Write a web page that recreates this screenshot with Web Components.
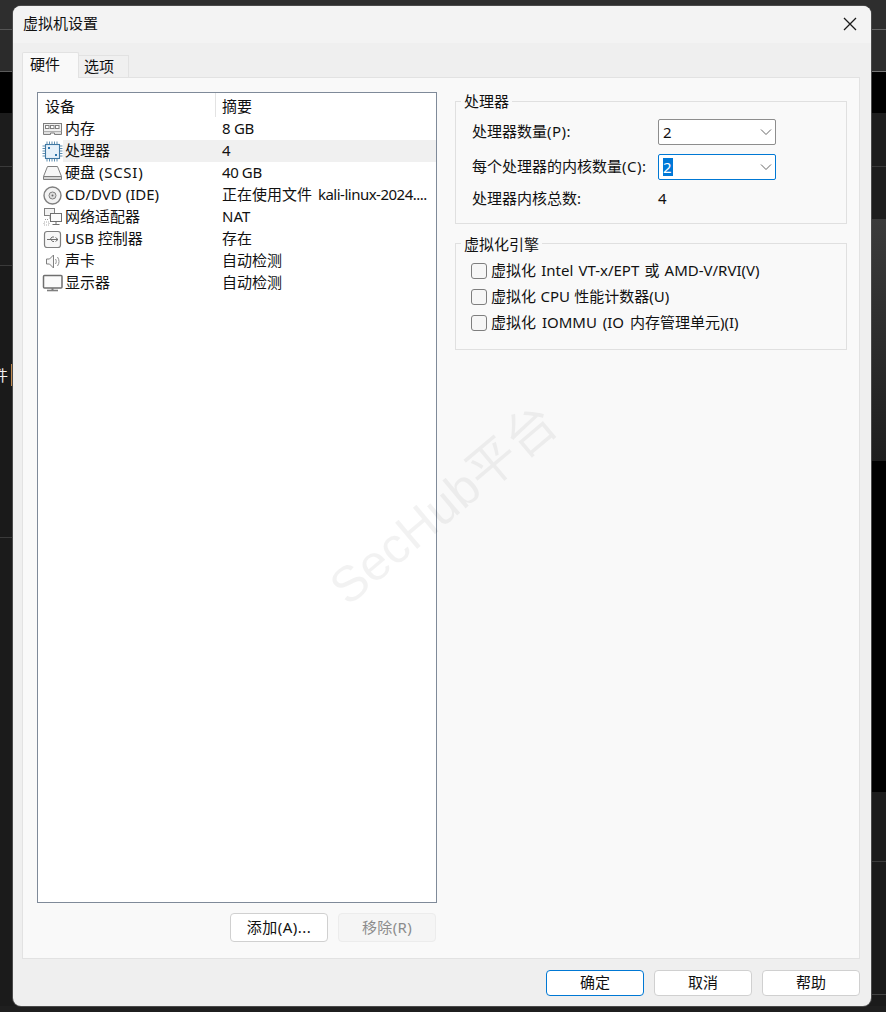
<!DOCTYPE html>
<html lang="zh"><head><meta charset="utf-8"><title>虚拟机设置</title>
<style>
html,body{margin:0;padding:0;background:#1b1b1b}
body{font:15px/22px "Noto Sans","Noto Sans CJK SC",sans-serif;color:#111}
</style></head><body>
<x-desktop>
<x-dialog heading="虚拟机设置">
  <x-panel>
    <div slot="left">
      <x-device-list>
        <x-device icon="mem" name="内存" summary="<span style='letter-spacing:-.3px'>8 GB</span>"></x-device>
        <x-device icon="cpu" name="处理器" summary="4" selected></x-device>
        <x-device icon="disk" name="硬盘 <span style='word-spacing:0;letter-spacing:.75px'>(SCSI)</span>" summary="<span style='letter-spacing:-.4px'>40 GB</span>"></x-device>
        <x-device icon="cd" name="CD/DVD (IDE)" summary="正在使用文件 <span style='letter-spacing:-.5px;margin-left:2px'>kali-linux-2024....</span>"></x-device>
        <x-device icon="net" name="网络适配器" summary="NAT"></x-device>
        <x-device icon="usb" name="USB 控制器" summary="存在"></x-device>
        <x-device icon="sound" name="声卡" summary="自动检测"></x-device>
        <x-device icon="display" name="显示器" summary="自动检测"></x-device>
      </x-device-list>
    </div>
    <x-btn slot="actions" style="letter-spacing:.5px">添加(A)...</x-btn>
    <x-btn slot="actions" disabled style="letter-spacing:.35px">移除(R)</x-btn>
    <x-group slot="right" legend="处理器" variant="form">
      <x-field label="处理器数量<span style='letter-spacing:.5px'>(P):</span>"><x-combo value="2"></x-combo></x-field>
      <x-field label="每个处理器的内核数量<span style='letter-spacing:.5px'>(C):</span>"><x-combo value="2" focused></x-combo></x-field>
      <x-field label="处理器内核总数:" plain><span>4</span></x-field>
    </x-group>
    <x-group slot="right" legend="虚拟化引擎" variant="checks">
      <x-check style="word-spacing:1.25px">虚拟化 Intel VT-x/EPT 或 AMD-V/RVI(V)</x-check>
      <x-check style="word-spacing:.5px">虚拟化 CPU 性能计数器(U)</x-check>
      <x-check style="word-spacing:2px">虚拟化 IOMMU (IO 内存管理单元)(I)</x-check>
    </x-group>
  </x-panel>
  <x-btn slot="footer" primary>确定</x-btn>
  <x-btn slot="footer">取消</x-btn>
  <x-btn slot="footer">帮助</x-btn>
</x-dialog>
</x-desktop>
<script>
function def(name, css, html){
  customElements.define(name, class extends HTMLElement{
    constructor(){super();this.attachShadow({mode:'open'});}
    connectedCallback(){
      const h=typeof html==='function'?html(this):html;
      this.shadowRoot.innerHTML='<style>'+css+'</style>'+h;
    }
  });
}
const a=(e,n)=>e.getAttribute(n)||'';
def('x-desktop',`
:host{display:block;position:relative;width:886px;height:1012px;overflow:hidden;background:#1b1b1b}
.wrap{position:relative;padding:6px 15px 6px 13px;height:1000px}
.bd{position:absolute;inset:0;display:grid;grid-template-rows:29px 1px 41px 1px 41px 53px 1px 98px 1px 271px 1px 1fr;background:#1b1b1b}
.bd i{display:block}
.r{position:absolute;left:871px;right:0;top:0;bottom:0;display:grid;grid-template-rows:29px 1px 41px 1px 41px 53px 1px 52px 242px 331px 69px 1px 132px 1px 1fr}
.r i{display:block}
.frag{position:absolute;left:-7px;top:364px;color:#f2f2f2;font-size:15px}
.tick{position:absolute;left:11px;top:364px;width:2px;height:22px;background:#c08a50}
.btm{position:absolute;left:0;right:0;top:1006px;height:6px;background:#1f1f1f}
`,`
<div class="bd">
<i style="background:#2e2e2e"></i><i style="background:#555"></i><i style="background:#2b2b2b"></i><i style="background:#5a5a5a"></i>
<i style="background:#000"></i><i style="background:#1c1c1c"></i><i style="background:#3a3a3a"></i><i style="background:#1c1c1c"></i><i style="background:#3a3a3a"></i><i style="background:#1a1a1a"></i><i style="background:#3a3a3a"></i><i style="background:#1b1b1b"></i>
</div>
<div class="r">
<i style="background:#2e2e2e"></i><i style="background:#666"></i><i style="background:#2d2d2d"></i><i style="background:#777"></i>
<i style="background:#000"></i><i style="background:#1e1e1e"></i><i style="background:#3a3a3a"></i><i style="background:#1e1e1e"></i><i style="background:linear-gradient(#3b3b3b,#1e1e1e)"></i><i style="background:#000"></i><i style="background:#1c1c1c"></i><i style="background:#3c3c3c"></i><i style="background:#1b1b1b"></i><i style="background:#444"></i><i style="background:#1b1b1b"></i>
</div>
<div class="btm"></div>
<span class="frag">件</span><span class="tick"></span>
<div class="wrap"><slot></slot></div>`);

def('x-dialog',`
:host{display:block;position:relative;width:858px;height:1000px;box-sizing:border-box;background:#efefef;border-radius:8px;overflow:hidden;box-shadow:0 0 0 1px #4a4a4a}
.title{box-sizing:border-box;height:37px;background:#f3f3f3;display:flex;align-items:center;justify-content:space-between;padding:0 13px 1px 10px;font-size:15px}
.title span{margin-bottom:3px}
.title svg{display:block}
.body{padding:9px 11px 0 9px}
.tabs{display:flex;align-items:flex-start;height:25px;position:relative;z-index:1}
.tab{box-sizing:border-box;border:1px solid #e2e2e2;border-bottom:0;white-space:nowrap}
.on{width:57px;height:26px;background:#f9f9f9;line-height:22px;padding-left:7px;border-radius:2px 2px 0 0}
.off{width:51px;height:22px;margin-top:3px;background:#f0f0f0;margin-left:-1px;line-height:20px;padding-left:5px}
.foot{display:flex;justify-content:flex-end;gap:10px;padding-top:11px}
.foot ::slotted(x-btn){height:26px;line-height:22px}
`,e=>`
<div class="title"><span>${a(e,'heading')}</span>
<svg width="16" height="16" viewBox="0 0 16 16"><path d="M2 2 14 14M14 2 2 14" stroke="#1a1a1a" stroke-width="1.3" fill="none"/></svg></div>
<div class="body">
<div class="tabs"><div class="tab on">硬件</div><div class="tab off">选项</div></div>
<slot></slot>
<div class="foot"><slot name="footer"></slot></div>
</div>`);

def('x-panel',`
:host{display:block;position:relative;box-sizing:border-box;width:838px;height:882px;background:#f9f9f9;border:1px solid #e2e2e2;padding:14px 12px 0 14px}
.grid{display:grid;grid-template-columns:400px 392px;column-gap:18px}
.actions{display:flex;justify-content:flex-end;gap:10px;margin-top:10px;padding-right:1px}
.right{padding-top:9px;display:flex;flex-direction:column;gap:19px}
.wm{position:absolute;left:314px;top:487px;font:50px/58px "Liberation Sans","Noto Sans CJK SC",sans-serif;color:rgba(0,0,0,.05);white-space:nowrap;transform:rotate(-40deg);transform-origin:0 50%;pointer-events:none}
`,`
<div class="grid"><div><slot name="left"></slot><div class="actions"><slot name="actions"></slot></div></div>
<div class="right"><slot name="right"></slot></div></div>
<div class="wm">SecHub平台</div>`);

def('x-device-list',`
:host{display:block;box-sizing:border-box;width:400px;height:811px;background:#fff;border:1px solid #7f8a99}
.head{display:grid;grid-template-columns:178px 1fr;height:25px;line-height:26px}
.head span:first-child{padding-left:7px;border-right:1px solid #e3e3e3;height:24px}
.head span:last-child{padding-left:6px}
`,`<div class="head"><span>设备</span><span>摘要</span></div><slot></slot>`);

const icons={
mem:`<rect x="1.500" y="4.500" width="18" height="8" fill="#f0f0f0" stroke="#7f7f7f"/><rect x="3.500" y="6.500" width="3.500" height="3" fill="#fff" stroke="#808080"/><rect x="8.500" y="6.500" width="3.500" height="3" fill="#fff" stroke="#808080"/><rect x="13.500" y="6.500" width="3.500" height="3" fill="#fff" stroke="#808080"/><path d="M1.500 12.500v3h7v-1.500h4v1.500h7v-3" fill="#e0e0e0" stroke="#7f7f7f"/>`,
cpu:`<rect x="3.500" y="3.500" width="14" height="14" fill="#e6f1fa" stroke="#3f78a3" stroke-width="1.100"/><path d="M5 .5v2.500M7.500 .5v2.500M10 .5v2.500M12.500 .5v2.500M15 .5v2.500M5 18v2.500M7.500 18v2.500M10 18v2.500M12.500 18v2.500M15 18v2.500M.5 5h2.500M.5 7.500h2.500M.5 10h2.500M.5 12.500h2.500M.5 15h2.500M18 5h2.500M18 7.500h2.500M18 10h2.500M18 12.500h2.500M18 15h2.500" stroke="#5f8eb0"/><rect x="6" y="6" width="2" height="2" fill="#2e76ad"/><rect x="13" y="13" width="2" height="2" fill="#2e76ad"/>`,
disk:`<path d="M5.500 3.500h10l4 10v3h-18v-3z" fill="#f7f7f7" stroke="#7f7f7f"/><path d="M1.500 13.500h18" stroke="#7f7f7f"/><rect x="2" y="14" width="17" height="2" fill="#d4d4d4"/>`,
cd:`<circle cx="10.500" cy="10.500" r="8.500" fill="#f2f2f2" stroke="#7f7f7f" stroke-width="1.400"/><circle cx="10.500" cy="10.500" r="3.500" fill="#dedede" stroke="#7f7f7f"/><circle cx="10.500" cy="10.500" r="1" fill="#666"/>`,
net:`<rect x="2.500" y="1.500" width="10" height="7" fill="#f3f3f3" stroke="#808080"/><path d="M7.500 8.500v4M3 12.500h4" stroke="#999" stroke-dasharray="1 1"/><rect x="8.500" y="6.500" width="11" height="8" fill="#fbfbfb" stroke="#6f6f6f"/><path d="M14 14.500v3M10.500 17.500h7" stroke="#6f6f6f"/><path d="M2 15h5v3H2z" fill="none" stroke="#aaa" stroke-dasharray="1 1"/>`,
usb:`<rect x="2.500" y="2.500" width="16" height="16" rx="2.500" fill="#f7f7f7" stroke="#7f7f7f" stroke-width="1.200"/><path d="M5 10.500h11M13.500 8.500l2.500 2-2.500 2M8 10.500l2-2.500h2M9 10.500l1.500 2H12" fill="none" stroke="#6f6f6f"/>`,
sound:`<path d="M4.500 8h3l4-4v13l-4-4h-3z" fill="#f7f7f7" stroke="#7f7f7f"/><path d="M13.500 8c1 1.500 1 3.500 0 5M15.500 6c2 3 2 6 0 9" fill="none" stroke="#8f8f8f"/>`,
display:`<rect x="1.500" y="2.500" width="18.500" height="12.500" rx="1" fill="#fbfbfb" stroke="#6f6f6f" stroke-width="1.500"/><path d="M10.500 15v2" stroke="#7d7d7d" stroke-width="2"/><path d="M5 17.500h11" stroke="#7f7f7f" stroke-width="1.600"/>`
};
def('x-device',`
:host{display:grid;grid-template-columns:25px 153px 1fr;height:22px;line-height:20px}
.i{padding-left:4px;display:flex;align-items:center}
.n{padding-left:2px;white-space:nowrap}
.s{padding-left:6px;white-space:nowrap;overflow:hidden}
:host([selected]) .n,:host([selected]) .s{background:#f0f0f0}
svg{display:block}
`,e=>`<span class="i"><svg width="21" height="21" viewBox="0 0 21 21">${icons[a(e,'icon')]}</svg></span><span class="n">${a(e,'name')}</span><span class="s">${a(e,'summary')}</span>`);

def('x-group',`
:host{display:block;position:relative;box-sizing:border-box;width:392px;border:1px solid #e0e0e0}
:host([variant=form]){height:123px;padding:17px 0 0 16px}
:host([variant=checks]){height:107px;padding:14px 0 0 15px}
.l{position:absolute;top:-11px;left:5px;padding:0 3px;background:#f9f9f9;line-height:22px}
:host([variant=form]) .l{top:-12px}
`,e=>`<span class="l">${a(e,'legend')}</span><slot></slot>`);

def('x-field',`
:host{display:grid;grid-template-columns:186px 1fr;align-items:center;height:26px;margin-bottom:9px}
:host([plain]){height:22px;margin-top:-2px}
.lb{margin-bottom:2px}
::slotted(span){margin-bottom:2px}
`,e=>`<span class="lb">${a(e,'label')}</span><slot></slot>`);

def('x-combo',`
:host{display:flex;align-items:center;justify-content:space-between;box-sizing:border-box;width:118px;height:26px;background:#fff;border:1px solid #8d8d8d;border-radius:2px;padding:0 3px 0 4px}
:host([focused]){border-color:#0078d4}
.v{line-height:22px}
:host([focused]) .v{background:#0078d7;color:#fff;height:18px;line-height:18px;padding-right:1px}
svg{display:block}
`,e=>`<span class="v">${a(e,'value')}</span><svg width="12" height="8" viewBox="0 0 12 8"><path d="M1 1.500 6 6.500 11 1.500" fill="none" stroke="#666" stroke-width="1"/></svg>`);

def('x-check',`
:host{display:flex;align-items:center;gap:4px;height:26px;white-space:nowrap}
.b{box-sizing:border-box;width:16px;height:16px;background:#f6f6f6;border:1px solid #7e7e7e;border-radius:3px;flex:none}
.t{line-height:20px;margin-bottom:2px}
`,`<span class="b"></span><span class="t"><slot></slot></span>`);

def('x-btn',`
:host{display:block;box-sizing:border-box;width:98px;height:29px;line-height:27px;text-align:center;background:#fff;border:1px solid #d0d0d0;border-radius:4px;white-space:nowrap}
:host([disabled]){background:#f5f5f5;border-color:#ececec;color:#8c8c8c}
:host([primary]){border-color:#0078d4}
`,`<slot></slot>`);
</script>
</body></html>
